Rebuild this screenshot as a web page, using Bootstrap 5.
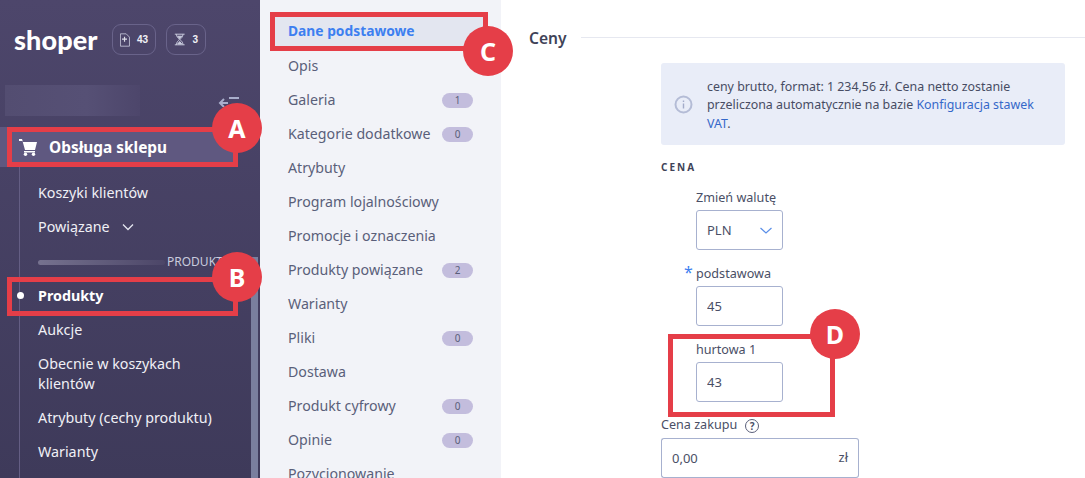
<!DOCTYPE html>
<html lang="pl"><head><meta charset="utf-8"><title>Ceny</title>
<link href="https://cdn.jsdelivr.net/npm/bootstrap@5.3.0/dist/css/bootstrap.min.css" rel="stylesheet">
<style>
html,body{height:478px;overflow:hidden}
body{font-family:"Noto Sans","Open Sans",sans-serif;font-size:14px;color:#4a4f66;position:relative;background:#fff}
.frame{height:478px;width:1085px}
.side{width:260px;flex:none;background:linear-gradient(#4d466b,#3e3a5a);color:#f3f3f8;position:relative;overflow:hidden}
.logo-row{height:80px;padding:24px 0 0 14px;gap:14px}
.logo-txt{font-family:Lato,sans-serif;font-weight:900;font-size:27px;line-height:31px;color:#fff;width:84px;letter-spacing:.1px}
.pill-box{height:31px;border:1px solid #69638a;border-radius:9px;font:700 10px "Liberation Sans",sans-serif;gap:7px;padding:0 7px;color:#f0f0f6}
.pill-a{width:44px}.pill-b{width:40px;margin-left:-4px}
.blur-row{height:47px;padding:5px 20px 0 5px}
.blur-box{width:135px;height:31px;background:linear-gradient(90deg,#534d71,#565075 60%,#4d466b)}
.main-item{height:40px;width:235px;background:#5f5880;font-weight:700;font-size:15.4px;color:#fff;padding-left:19px;gap:12px}
.main-item span{margin-top:2px}
.sub-wrap{margin-left:19px;border-left:1px solid #645e84;padding:8px 0 0 18px;width:232px;height:311px}
.sub-item{height:34px;font-size:14.3px;color:#f0f0f6;padding-top:2px}
.sub-item.two{height:54px;line-height:20px;padding-top:2px}
.sub-item.on{font-weight:700;color:#fff;position:relative}
.sub-item.on::before{content:"";position:absolute;left:-21px;top:14px;width:7px;height:7px;border-radius:50%;background:#fff}
.sep{height:35px;padding-top:3px;gap:2px;font-size:12px;color:#c9cbdd;white-space:nowrap}
.sep-bar{width:127px;height:5px;border-radius:3px;background:linear-gradient(90deg,#76728f,#4c4668);flex:none}
.chev{margin-left:4px}
.scroll-th{position:absolute;left:251px;top:257px;width:7px;height:221px;background:#7a7f9e}
.mid{width:241px;flex:none;background:#f2f3f8;padding:14px 16px 0 14px;overflow:hidden}
.mid-item{height:34px;padding:2px 12px 0 14px;font-size:14.2px;color:#5a5f7a;justify-content:space-between}
.mid-item.on{background:#e3e6f0;color:#3d7ff0;font-weight:700;font-size:13.8px;padding-top:0}
.cnt{display:inline-block;width:31px;height:15px;border-radius:8px;background:#c3bddd;color:#5a5f7a;font:400 10px/15px "Noto Sans",sans-serif;text-align:center}
.pane{flex:1;min-width:0;padding:27px 20px 0 28px}
.head-row{height:22px;gap:14px;margin-right:-20px;margin-bottom:14px}
.head-row h2{font-size:15.6px;font-weight:600;margin:0;color:#3f4358}
.head-line{flex:1;height:1px;background:#e6e8f0;margin-bottom:2px}
.body-col{margin-left:132px}
.note{background:#e9edf8;border:0;border-radius:3px;height:82px;margin:0;padding:0 24px 0 13px;gap:14px;font-size:12.4px;line-height:18.5px;color:#474c63}
.note div{padding-top:3px}
.note a{color:#3568c9;text-decoration:none}
.cap{font:700 10px/12px "Noto Sans",sans-serif;letter-spacing:2px;color:#3f4358;margin:16px 0 15px}
.fld{margin-left:35px;width:87px;position:relative}
.fld label{display:block;font-size:12.6px;line-height:18px;height:18px;padding-top:1px;margin:0 0 4px;color:#4a4f66;white-space:nowrap}
.fld .form-control,.fld .form-select,.buy .form-control{height:40px;border:1px solid #a7b1cf;border-radius:3px;font-size:13px;color:#4a4f66;padding:0 10px;box-shadow:none}
.fld .form-select{background-position:right 9px center;background-size:14px 11px;background-image:url("data:image/svg+xml,%3csvg xmlns='http://www.w3.org/2000/svg' viewBox='0 0 14 8'%3e%3cpath fill='none' stroke='%235b8fe8' stroke-width='1.2' d='M1.5 1.5 7 6.5l5.5-5'/%3e%3c/svg%3e");padding:1px 20px 0 10px}
.fld+.fld{margin-top:14px}
.req{position:absolute;left:-12px;top:-1px;color:#3d7ff0;font-size:16px;line-height:18px}
.buy{width:198px;margin-top:14px}
.buy label{display:flex;align-items:center;gap:8px;font-size:12.6px;height:18px;margin-bottom:4px;padding-top:1px}
.buy .input-group-text{background:#fff;border:1px solid #a7b1cf;border-left:0;font-size:13px;color:#4a4f66;padding:0 10px;border-radius:0 3px 3px 0}
.buy .form-control{border-right:0;border-radius:3px 0 0 3px}
.qm{width:14px;height:14px;border:1px solid #5a5f7a;border-radius:50%;font-size:10px;line-height:12px;text-align:center;font-weight:700}
.mark-box{position:absolute;border:5px solid #e53e48;pointer-events:none}
.mark-dot{position:absolute;width:50px;height:50px;border-radius:50%;background:#e53e48;color:#fff;font:700 25px/50px "Noto Sans",sans-serif;text-align:center}
.ma{left:7px;top:127px;width:231px;height:40px}
.mb{left:7px;top:277px;width:231px;height:39px}
.mc{left:270px;top:12px;width:218px;height:39px}
.md{left:668px;top:334px;width:167px;height:83px}
.da{left:212px;top:103px}.db{left:212px;top:252px}.dc{left:463px;top:26px}.dd{left:810px;top:309px}
</style></head>
<body>
<div class="d-flex frame">
  <aside class="side">
    <div class="d-flex align-items-start logo-row">
      <div class="logo-txt">shoper</div>
      <div class="d-flex align-items-center pill-box pill-a">
        <svg width="12" height="16" viewBox="0 0 12 16" fill="none" stroke="#c9cbdd" stroke-width="1"><path d="M.5.5h7l4 4v11h-11z"/><path d="M5.500 4v6M2.500 7h6" stroke="#dfe0ea" stroke-width="1.400"/></svg><span>43</span>
      </div>
      <div class="d-flex align-items-center pill-box pill-b">
        <svg width="13" height="15" viewBox="0 0 14 15" fill="none" stroke="#c9cbdd" stroke-width="1.200"><path d="M1 1h12M1 14h12M3 1c0 4 3 5 3.500 6.500C6 9 3 10 3 14M11 1c0 4-3 5-3.500 6.500C8 9 11 10 11 14"/><path d="M4.500 13l2.500-3 2.500 3zM4.500 3.500h5L7 6.500z" fill="#c9cbdd"/></svg><span>3</span>
      </div>
    </div>
    <div class="d-flex justify-content-between blur-row">
      <div class="blur-box"></div>
      <svg class="mt-2" width="22" height="14" viewBox="0 0 22 14" fill="none"><path d="M11 5h10" stroke="#a9aecb" stroke-width="2"/><path d="M6 6 2 10l4 4M2 10h8" stroke="#a9aecb" stroke-width="2"/></svg>
    </div>
    <div class="d-flex align-items-center main-item">
      <svg width="18" height="17" viewBox="0 0 18 17" fill="#fff"><path d="M0 0h3l1 3h14l-2 8H6L3.500 2H0z"/><path d="M5 12h11v1.500H5z"/><circle cx="6.500" cy="15.300" r="1.700"/><circle cx="14.500" cy="15.300" r="1.700"/></svg>
      <span>Obsługa sklepu</span>
    </div>
    <div class="sub-wrap">
      <div class="d-flex align-items-center sub-item">Koszyki klientów</div>
      <div class="d-flex align-items-center sub-item gap-2">Powiązane <svg class="chev" width="12" height="8" viewBox="0 0 12 8" fill="none" stroke="#e4e5ef" stroke-width="1.300"><path d="M1 1.500l5 5 5-5"/></svg></div>
      <div class="d-flex align-items-center sep"><span class="sep-bar"></span><span>PRODUKTY</span></div>
      <div class="d-flex align-items-center sub-item on">Produkty</div>
      <div class="d-flex align-items-center sub-item">Aukcje</div>
      <div class="d-flex align-items-center sub-item two">Obecnie w koszykach<br>klientów</div>
      <div class="d-flex align-items-center sub-item">Atrybuty (cechy produktu)</div>
      <div class="d-flex align-items-center sub-item">Warianty</div>
    </div>
    <div class="scroll-th"></div>
  </aside>
  <nav class="mid">
    <div class="d-flex align-items-center mid-item on">Dane podstawowe</div>
    <div class="d-flex align-items-center mid-item">Opis</div>
    <div class="d-flex align-items-center mid-item">Galeria <span class="cnt">1</span></div>
    <div class="d-flex align-items-center mid-item">Kategorie dodatkowe <span class="cnt">0</span></div>
    <div class="d-flex align-items-center mid-item">Atrybuty</div>
    <div class="d-flex align-items-center mid-item">Program lojalnościowy</div>
    <div class="d-flex align-items-center mid-item">Promocje i oznaczenia</div>
    <div class="d-flex align-items-center mid-item">Produkty powiązane <span class="cnt">2</span></div>
    <div class="d-flex align-items-center mid-item">Warianty</div>
    <div class="d-flex align-items-center mid-item">Pliki <span class="cnt">0</span></div>
    <div class="d-flex align-items-center mid-item">Dostawa</div>
    <div class="d-flex align-items-center mid-item">Produkt cyfrowy <span class="cnt">0</span></div>
    <div class="d-flex align-items-center mid-item">Opinie <span class="cnt">0</span></div>
    <div class="d-flex align-items-center mid-item">Pozycjonowanie</div>
  </nav>
  <main class="pane">
    <div class="d-flex align-items-center head-row"><h2>Ceny</h2><div class="head-line"></div></div>
    <div class="body-col">
      <div class="alert d-flex align-items-center note">
        <svg class="flex-shrink-0" width="19" height="19" viewBox="0 0 19 19" fill="none"><circle cx="9.500" cy="9.500" r="8" stroke="#b4bcd6" stroke-width="2"/><path d="M9.500 8.500v5M9.500 5.500v1.500" stroke="#a3acc9" stroke-width="1.400"/></svg>
        <div>ceny brutto, format: 1 234,56 zł. Cena netto zostanie przeliczona automatycznie na bazie <a href="#">Konfiguracja stawek VAT</a>.</div>
      </div>
      <div class="cap">CENA</div>
      <div class="fld"><label>Zmień walutę</label><select class="form-select"><option>PLN</option></select></div>
      <div class="fld"><span class="req">*</span><label>podstawowa</label><input class="form-control" value="45"></div>
      <div class="fld"><label>hurtowa 1</label><input class="form-control" value="43"></div>
      <div class="buy"><label>Cena zakupu <span class="qm">?</span></label>
        <div class="input-group"><input class="form-control" value="0,00"><span class="input-group-text">zł</span></div>
      </div>
    </div>
  </main>
</div>
<div class="mark-box ma"></div><div class="mark-box mb"></div><div class="mark-box mc"></div><div class="mark-box md"></div>
<div class="mark-dot da">A</div><div class="mark-dot db">B</div><div class="mark-dot dc">C</div><div class="mark-dot dd">D</div>
<script src="https://cdn.jsdelivr.net/npm/bootstrap@5.3.0/dist/js/bootstrap.bundle.min.js"></script>
</body></html>
